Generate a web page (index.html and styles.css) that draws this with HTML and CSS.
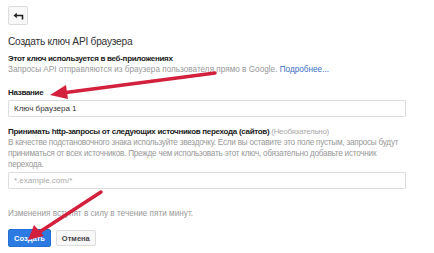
FILE: index.html
```html
<!DOCTYPE html>
<html lang="ru">

<head>
    <meta charset="UTF-8">
    <meta name="viewport" content="width=device-width, initial-scale=1.0">
    <title>Создать ключ API браузера</title>
    <link rel="stylesheet" href="styles.css">
</head>

<body>
    <div class="page">
        <button class="back" type="button">
            <svg width="11" height="8" viewBox="0 0 11 8">
                <path d="M9.5 7.5V3.5H2" stroke="#222" stroke-width="1.6" fill="none" />
                <path d="M0.5 3.5L3.8 0.8V6.2Z" fill="#222" />
            </svg>
        </button>

        <h1 class="title">Создать ключ API браузера</h1>

        <div class="section first">
            <div class="label">Этот ключ используется в веб-приложениях</div>
            <div class="hint">Запросы API отправляются из браузера пользователя прямо в Google. <a href="#">Подробнее...</a></div>
        </div>

        <div class="section name">
            <div class="label">Название</div>
            <input class="field" type="text" value="Ключ браузера 1">
        </div>

        <div class="section referers">
            <div class="label">Принимать http-запросы от следующих источников перехода (сайтов) <span class="optional">(Необязательно)</span></div>
            <div class="hint wide">В качестве подстановочного знака используйте звездочку. Если вы оставите это поле пустым, запросы будут<br>
                приниматься от всех источников. Прежде чем использовать этот ключ, обязательно добавьте источник<br>
                перехода.</div>
            <input class="field" type="text" placeholder="*.example.com/*">
        </div>

        <div class="note">Изменения вступят в силу в течение пяти минут.</div>

        <div class="actions">
            <button class="btn primary" type="button">Создать</button>
            <button class="btn" type="button">Отмена</button>
        </div>
    </div>

    <!-- red arrows drawn over the screenshot -->
    <svg class="arrows" width="434" height="253" viewBox="0 0 434 253">
        <line x1="215" y1="73" x2="62" y2="93" stroke="#d3203c" stroke-width="3.5" stroke-linecap="round" />
        <path d="M50 95L66 85L68 99Z" fill="#d3203c" />
        <line x1="101" y1="192" x2="38" y2="233" stroke="#d3203c" stroke-width="3.5" stroke-linecap="round" />
        <path d="M28 240L34 225L44 236Z" fill="#d3203c" />
    </svg>
</body>

</html>
```

FILE: styles.css
```css
body {
    margin: 0;
    background: #fff;
    font-family: "Liberation Sans", Arial, sans-serif;
    color: #222;
}

.page {
    padding: 6px 8px 0 8px;
    width: 398px;
}

.back {
    display: flex;
    align-items: center;
    justify-content: center;
    width: 20px;
    height: 19px;
    padding: 0;
    background: #f8f8f8;
    border: 1px solid #dcdcdc;
    border-radius: 2px;
}

.title {
    margin: 11px 0 0 0;
    font-size: 10.2px;
    letter-spacing: -0.25px;
    line-height: 12px;
    font-weight: normal;
    color: #333;
}

.section.first {
    margin-top: 5px;
}

.section.name {
    margin-top: 12px;
}

.section.referers {
    margin-top: 9px;
}

.label {
    font-size: 8px;
    letter-spacing: -0.3px;
    font-weight: bold;
    color: #222;
    line-height: 11px;
}

.optional {
    font-weight: normal;
    color: #aaa;
}

.hint {
    font-size: 8.2px;
    color: #999;
    line-height: 11px;
}

.hint.wide {
    width: 420px;
    letter-spacing: -0.25px;
}

.hint a {
    color: #3b6fc4;
    text-decoration: none;
}

.field {
    display: block;
    box-sizing: border-box;
    width: 398px;
    height: 17px;
    margin-top: 2px;
    padding: 0 5px;
    border: 1px solid #ddd;
    border-radius: 1px;
    font-family: "Liberation Sans", Arial, sans-serif;
    font-size: 8px;
    color: #333;
}

.field::placeholder {
    color: #aaa;
}

.note {
    margin-top: 19px;
    font-size: 8.2px;
    line-height: 11px;
    color: #999;
}

.actions {
    display: flex;
    align-items: center;
    gap: 5px;
    margin-top: 10px;
}

.btn {
    height: 16px;
    padding: 0 5px;
    background: #f8f8f8;
    border: 1px solid #dcdcdc;
    border-radius: 2px;
    font-family: "Liberation Sans", Arial, sans-serif;
    font-size: 7.5px;
    font-weight: bold;
    color: #444;
}

.btn.primary {
    height: 18px;
    background: #2b7be2;
    border-color: #2470d6;
    color: #fff;
}

.arrows {
    position: absolute;
    top: 0;
    left: 0;
    pointer-events: none;
}
```
